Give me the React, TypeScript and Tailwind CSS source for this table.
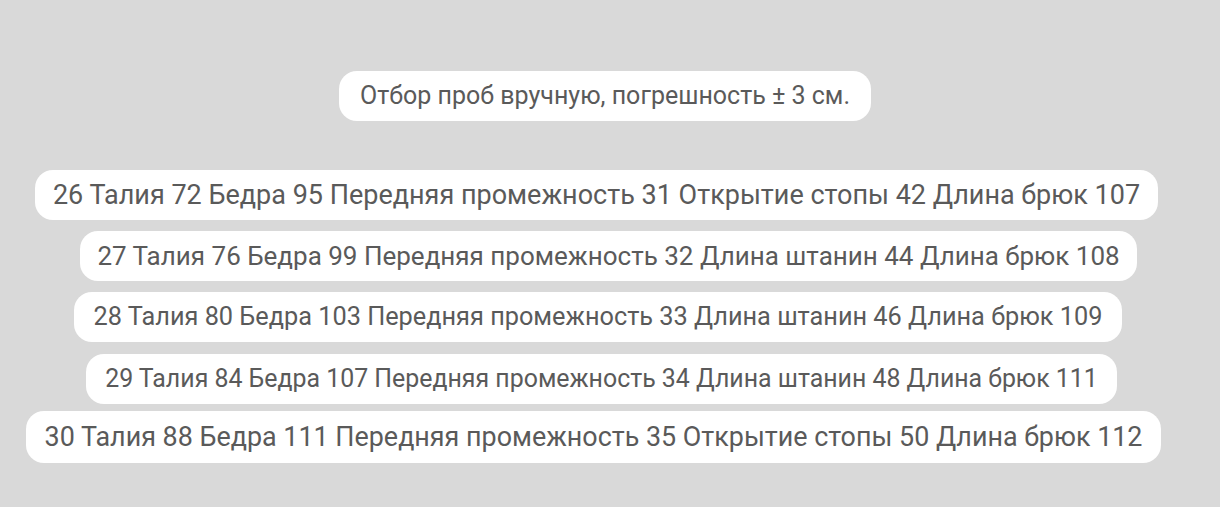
const rows = [
  { text: "26 Талия 72 Бедра 95 Передняя промежность 31 Открытие стопы 42 Длина брюк 107", cls: "ml-[35px] w-[1123px] mt-[49px] h-[50px] text-[27px]" },
  { text: "27 Талия 76 Бедра 99 Передняя промежность 32 Длина штанин 44 Длина брюк 108", cls: "ml-[80px] w-[1057px] mt-[11px] h-[50px] text-[26px]" },
  { text: "28 Талия 80 Бедра 103 Передняя промежность 33 Длина штанин 46 Длина брюк 109", cls: "ml-[74px] w-[1048px] mt-[11px] h-[50px] text-[25.3px]" },
  { text: "29 Талия 84 Бедра 107 Передняя промежность 34 Длина штанин 48 Длина брюк 111", cls: "ml-[86px] w-[1031px] mt-[12px] h-[50px] text-[24.9px]" },
  { text: "30 Талия 88 Бедра 111 Передняя промежность 35 Открытие стопы 50 Длина брюк 112", cls: "ml-[26px] w-[1135px] mt-[7px] h-[52px] text-[26.9px]" },
];

export default function App() {
  return (
    <div className="w-[1220px] h-[507px] bg-[#d9d9d9] overflow-hidden font-['Roboto','Noto_Sans',sans-serif] text-[#5a5a5a]">
      <div className="pt-[71px] flex flex-col items-start">
        <div className="ml-[339px] w-[532px] h-[50px] rounded-[18px] bg-white flex items-center justify-center text-[25px] whitespace-nowrap">
          Отбор проб вручную, погрешность ± 3 см.
        </div>
        {rows.map((r, i) => (
          <div
            key={i}
            className={`${r.cls} rounded-[18px] bg-white flex items-center justify-center whitespace-nowrap`}
          >
            {r.text}
          </div>
        ))}
      </div>
    </div>
  );
}
